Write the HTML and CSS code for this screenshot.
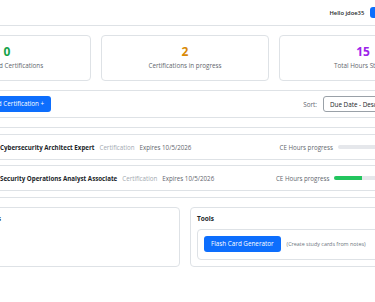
FILE: index.html
```html
<!DOCTYPE html>
<html lang="en">
<head>
  <meta charset="UTF-8" />
  <meta name="viewport" content="width=device-width, initial-scale=1.0"/>
  <title>Certification Dashboard</title>
  <link rel="stylesheet" href="styles.css">
</head>
<body>
  <div class="app">
    <header class="topbar">
      <span class="hello">Hello jdoe35</span>
      <button class="btn btn-sm">Logout</button>
    </header>

    <main class="page">
      <section class="stats">
        <div class="stat">
          <div class="stat-num num-green">0</div>
          <div class="stat-label">Completed Certifications</div>
        </div>
        <div class="stat">
          <div class="stat-num num-orange">2</div>
          <div class="stat-label">Certifications in progress</div>
        </div>
        <div class="stat">
          <div class="stat-num num-purple">15</div>
          <div class="stat-label">Total Hours Studied</div>
        </div>
      </section>

      <section class="toolbar">
        <button class="btn">Add Certification +</button>
        <div class="sort">
          <label for="sort">Sort:</label>
          <select id="sort" class="sort-select">
            <option>Due Date - Descending</option>
            <option>Due Date - Ascending</option>
          </select>
        </div>
      </section>

      <section class="list">
        <div class="row">
          <div class="row-info">
            <span class="row-title">Cybersecurity Architect Expert</span>
            <span class="row-type">Certification</span>
            <span class="row-date">Expires 10/5/2026</span>
          </div>
          <div class="row-progress">
            <span>CE Hours progress</span>
            <div class="bar"><div class="bar-fill" style="width: 0%"></div></div>
            <span>0 / 20</span>
          </div>
        </div>
        <div class="row">
          <div class="row-info">
            <span class="row-title">Security Operations Analyst Associate</span>
            <span class="row-type">Certification</span>
            <span class="row-date">Expires 10/5/2026</span>
          </div>
          <div class="row-progress">
            <span>CE Hours progress</span>
            <div class="bar"><div class="bar-fill" style="width: 50%"></div></div>
            <span>10 / 20</span>
          </div>
        </div>
      </section>

      <section class="panels">
        <div class="panel">
          <h3>Upcoming Expirations</h3>
        </div>
        <div class="panel">
          <h3>Tools</h3>
          <div class="tool-box">
            <button class="btn">Flash Card Generator</button>
            <span class="tool-hint">(Create study cards from notes)</span>
          </div>
        </div>
      </section>
    </main>
  </div>
</body>
</html>
```

FILE: styles.css
```css
* {
  box-sizing: border-box;
}

body {
  margin: 0;
  background: #ffffff;
  font-family: 'Segoe UI', 'Open Sans', sans-serif;
  font-size: 6.3px;
  color: #212529;
  overflow: hidden;
}

.app {
  width: 524px;
  margin-left: -77px;
}

.topbar {
  height: 26px;
  border-bottom: 1px solid #dee2e6;
  display: flex;
  align-items: center;
  justify-content: flex-end;
  gap: 6px;
  padding-right: 42px;
}

.hello {
  font-size: 5.8px;
  font-weight: 600;
}

.btn {
  height: 16px;
  padding: 0 7px;
  border: none;
  border-radius: 3px;
  background-color: #0d6efd;
  color: white;
  font-family: inherit;
  font-size: 6.3px;
  line-height: 16px;
  white-space: nowrap;
  cursor: pointer;
}

.btn-sm {
  height: 11px;
  font-size: 5.8px;
  line-height: 11px;
  padding: 0 8px;
}

.page {
  padding-top: 9px;
  display: flex;
  flex-direction: column;
  gap: 9px;
}

.stats {
  display: grid;
  grid-template-columns: repeat(3, 1fr);
  gap: 10px;
}

.stat {
  border: 1px solid #dee2e6;
  border-radius: 4px;
  padding: 9px 4px 10px;
  text-align: center;
}

.stat-num {
  font-size: 12px;
  font-weight: 700;
  line-height: 14px;
}

.num-green { color: #16a34a; }
.num-orange { color: #d98a06; }
.num-purple { color: #9d23ea; }

.stat-label {
  margin-top: 2px;
  line-height: 9px;
  color: #5f666d;
  white-space: nowrap;
}

.toolbar {
  height: 28px;
  border: 1px solid #dee2e6;
  border-radius: 4px;
  display: flex;
  align-items: center;
  justify-content: space-between;
  padding: 0 7px 0 59px;
}

.sort {
  display: flex;
  align-items: center;
  gap: 6px;
  color: #5f666d;
}

.sort-select {
  width: 116px;
  height: 16px;
  padding: 0 6px;
  border: 1px solid #9aa1a8;
  border-radius: 3px;
  background: #fff;
  color: #212529;
  font-family: inherit;
  font-size: 6.3px;
  appearance: none;
}

.list {
  border: 1px solid #dee2e6;
  border-radius: 4px;
  padding: 6px;
  display: flex;
  flex-direction: column;
  gap: 5px;
}

.row {
  height: 26px;
  border: 1px solid #dee2e6;
  border-radius: 4px;
  display: flex;
  align-items: center;
  justify-content: space-between;
  padding: 0 24px 0 69px;
  font-size: 6.2px;
  white-space: nowrap;
}

.row-info {
  display: flex;
  align-items: center;
  gap: 5px;
}

.row-title {
  font-weight: 700;
}

.row-type {
  color: #a3aab1;
}

.row-date {
  color: #5f666d;
}

.row-progress {
  display: flex;
  align-items: center;
  gap: 5px;
  color: #5f666d;
}

.bar {
  width: 56px;
  height: 4px;
  border-radius: 2px;
  background: #e5e7eb;
  overflow: hidden;
}

.bar-fill {
  height: 100%;
  background: #22c55e;
}

.panels {
  display: grid;
  grid-template-columns: 1fr 1fr;
  gap: 10px;
}

.panel {
  border: 1px solid #dee2e6;
  border-radius: 4px;
  padding: 7px 6px 6px;
}

.panel h3 {
  margin: 0 0 6px;
  font-size: 6.5px;
  font-weight: 700;
  line-height: 8px;
  white-space: nowrap;
}

.tool-box {
  border: 1px solid #dee2e6;
  border-radius: 4px;
  padding: 6px 6px 7px;
  display: flex;
  align-items: center;
  gap: 6px;
}

.tool-hint {
  font-size: 5.4px;
  color: #6c757d;
  white-space: nowrap;
}
```
